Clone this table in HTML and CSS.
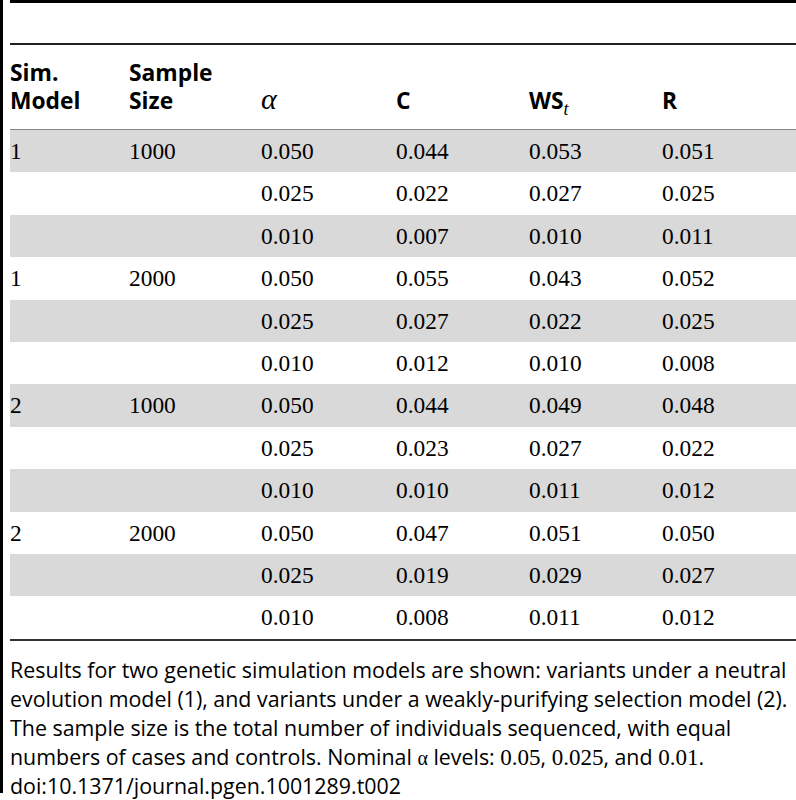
FILE: index.html
```html
<!DOCTYPE html>
<html>
<head>
<meta charset="utf-8">
<link rel="stylesheet" href="styles.css">
</head>
<body>
<div class="page">
  <div class="rule-top"></div>
  <div class="title-space"></div>
  <div class="rule-mid"></div>
  <table class="data">
    <colgroup>
      <col class="c1"><col class="c2"><col class="c3"><col class="c4"><col class="c5"><col class="c6">
    </colgroup>
    <thead>
      <tr>
        <th>Sim.<br>Model</th>
        <th>Sample<br>Size</th>
        <th><span class="greek">α</span></th>
        <th>C</th>
        <th>WS<sub class="sub">t</sub></th>
        <th>R</th>
      </tr>
    </thead>
    <tbody>
      <tr class="shade"><td>1</td><td>1000</td><td>0.050</td><td>0.044</td><td>0.053</td><td>0.051</td></tr>
      <tr><td></td><td></td><td>0.025</td><td>0.022</td><td>0.027</td><td>0.025</td></tr>
      <tr class="shade"><td></td><td></td><td>0.010</td><td>0.007</td><td>0.010</td><td>0.011</td></tr>
      <tr><td>1</td><td>2000</td><td>0.050</td><td>0.055</td><td>0.043</td><td>0.052</td></tr>
      <tr class="shade"><td></td><td></td><td>0.025</td><td>0.027</td><td>0.022</td><td>0.025</td></tr>
      <tr><td></td><td></td><td>0.010</td><td>0.012</td><td>0.010</td><td>0.008</td></tr>
      <tr class="shade"><td>2</td><td>1000</td><td>0.050</td><td>0.044</td><td>0.049</td><td>0.048</td></tr>
      <tr><td></td><td></td><td>0.025</td><td>0.023</td><td>0.027</td><td>0.022</td></tr>
      <tr class="shade"><td></td><td></td><td>0.010</td><td>0.010</td><td>0.011</td><td>0.012</td></tr>
      <tr><td>2</td><td>2000</td><td>0.050</td><td>0.047</td><td>0.051</td><td>0.050</td></tr>
      <tr class="shade"><td></td><td></td><td>0.025</td><td>0.019</td><td>0.029</td><td>0.027</td></tr>
      <tr><td></td><td></td><td>0.010</td><td>0.008</td><td>0.011</td><td>0.012</td></tr>
    </tbody>
  </table>
  <div class="note">
    <p>Results for two genetic simulation models are shown: variants under a neutral evolution model (1), and variants under a weakly-purifying selection model (2). The sample size is the total number of individuals sequenced, with equal numbers of cases and controls. Nominal <span class="sym">α</span> levels: <span class="num">0.05</span>, <span class="num">0.025</span>, and <span class="num">0.01</span>.</p>
    <p>doi:10.1371/journal.pgen.1001289.t002</p>
  </div>
</div>
</body>
</html>
```

FILE: styles.css
```css
html, body {
  margin: 0;
  padding: 0;
  background: #ffffff;
}

body {
  padding-bottom: 12px;
}

.page {
  width: 796px;
  height: 793px;
  border-left: 3px solid #000000;
  padding-left: 7px;
  box-sizing: border-box;
  overflow: visible;
}

.rule-top {
  height: 3px;
  background: #000000;
}

.title-space {
  height: 40px;
}

.rule-mid {
  height: 2px;
  background: #222222;
}

.data {
  width: 786px;
  border-collapse: collapse;
  table-layout: fixed;
}

.c1 { width: 119px; }
.c2 { width: 132px; }
.c3 { width: 135px; }
.c4 { width: 133px; }
.c5 { width: 133px; }
.c6 { width: 134px; }

.data thead th {
  font-family: "Open Sans", "Liberation Sans", sans-serif;
  font-weight: 700;
  font-size: 22.8px;
  line-height: 28px;
  text-align: left;
  vertical-align: bottom;
  padding: 0 0 14px 0;
  height: 70px;
  border-bottom: 1px solid #888888;
  color: #000;
}

.greek {
  font-family: "Liberation Serif", serif;
  font-style: italic;
  font-weight: 400;
  font-size: 30px;
  line-height: 0;
}

.sub {
  font-family: "Liberation Serif", serif;
  font-style: italic;
  font-weight: 400;
  font-size: 18px;
  vertical-align: -6px;
  line-height: 0;
}

.data tbody td {
  font-family: "Liberation Serif", serif;
  font-size: 23.4px;
  line-height: 42.4px;
  height: 42.4px;
  padding: 0;
  color: #000;
}

.data tbody tr.shade td {
  background: #d9d9d9;
}

.data tbody tr:last-child td {
  border-bottom: 2px solid #333333;
}

.note {
  padding-top: 14px;
  font-family: "Open Sans", "Liberation Sans", sans-serif;
  font-size: 21.4px;
  line-height: 29px;
  color: #000;
}

.note p {
  margin: 0;
}

.sym {
  font-family: "Liberation Serif", serif;
  font-size: 20px;
  line-height: 1;
}

.num {
  font-family: "Liberation Serif", serif;
  font-size: 23px;
  line-height: 1;
}
```
